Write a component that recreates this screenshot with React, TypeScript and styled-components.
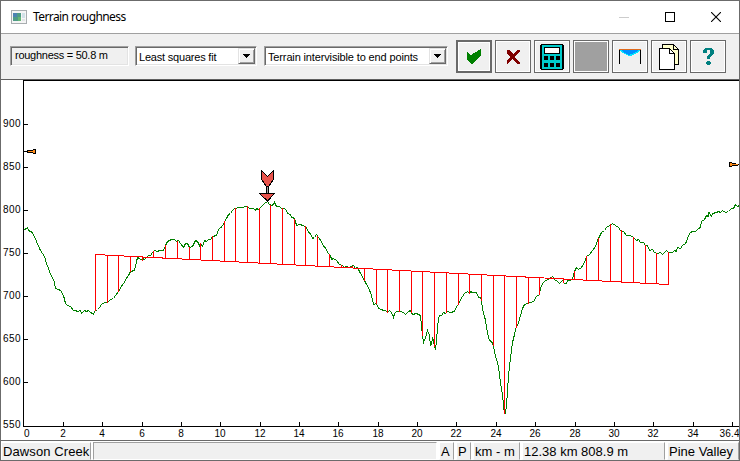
import React from 'react';
import styled, { createGlobalStyle } from 'styled-components';

const GlobalStyle = createGlobalStyle`
  * { box-sizing: border-box; }
  body { margin: 0; background: #fff; overflow: hidden; }
`;

const Window = styled.div`
  width: 740px;
  height: 461px;
  display: flex;
  flex-direction: column;
  border: 1px solid #6b6b6b;
  background: #f0f0f0;
  font-family: 'Liberation Sans', Arial, sans-serif;
  color: #000;
`;

const TitleBar = styled.header`
  height: 32px;
  flex: none;
  display: flex;
  align-items: center;
  padding-left: 10px;
  background: #fff;
`;

const Title = styled.h1`
  flex: 1;
  margin: 0 0 0 6px;
  font: 400 12px/16px 'Noto Sans', 'Open Sans', sans-serif;
  letter-spacing: -0.58px;
`;

const Caption = styled.span`
  width: 46px;
  height: 31px;
  display: flex;
  align-items: center;
  justify-content: center;
`;

const Toolbar = styled.div`
  height: 47px;
  flex: none;
  display: flex;
  align-items: flex-start;
  border-top: 1px solid #a0a0a0;
  border-bottom: 1px solid #606060;
  padding: 7px 0 0 9px;
`;

const sunken = `
  border: 1px solid;
  border-color: #a0a0a0 #fff #fff #a0a0a0;
  box-shadow: inset 1px 1px 0 #696969, inset -1px -1px 0 #e3e3e3;
`;

const Readout = styled.div<{ $spacing: number }>`
  width: 119px;
  height: 20px;
  margin-top: 5px;
  padding-left: 4px;
  font-size: 11px;
  line-height: 17px;
  letter-spacing: ${p => p.$spacing}px;
  white-space: nowrap;
  ${sunken}
`;

const Combo = styled.div<{ $width: number; $gap: number; $spacing: number }>`
  width: ${p => p.$width}px;
  height: 20px;
  margin: 5px 0 0 ${p => p.$gap}px;
  padding: 1px 1px 1px 3px;
  display: flex;
  justify-content: space-between;
  background: #fff;
  font-size: 11px;
  line-height: 18px;
  letter-spacing: ${p => p.$spacing}px;
  white-space: nowrap;
  ${sunken}
`;

const DropButton = styled.span`
  width: 17px;
  height: 16px;
  display: flex;
  align-items: center;
  justify-content: center;
  background: #f0f0f0;
  border: 1px solid;
  border-color: #e3e3e3 #696969 #696969 #e3e3e3;
  box-shadow: inset 1px 1px 0 #fff, inset -1px -1px 0 #a0a0a0;
`;

const Tools = styled.div`
  display: flex;
  gap: 3px;
  margin-left: 8px;
`;

const ToolButton = styled.button<{ $default?: boolean; $fill?: string }>`
  width: 36px;
  height: 33px;
  margin: -1px 0 0;
  padding: 0;
  display: flex;
  align-items: center;
  justify-content: center;
  border: ${p => (p.$default ? 2 : 1)}px solid #696969;
  box-shadow: inset 0 0 0 1px #fff;
  background: ${p => p.$fill || '#f0f0f0'};
`;

const PlotArea = styled.main`
  height: 360px;
  flex: none;
  background: #fff;
`;

const StatusBar = styled.footer`
  height: 20px;
  flex: none;
  display: flex;
  gap: 2px;
  border-top: 1px solid #696969;
  background: #fff;
`;

const Cell = styled.div<{ $width: number; $inset: number; $spacing?: number; $sunken?: boolean }>`
  width: ${p => p.$width}px;
  height: 18px;
  margin-top: 1px;
  flex: none;
  padding-left: ${p => p.$inset}px;
  overflow: hidden;
  background: #f0f0f0;
  border: 1px solid;
  border-color: ${p => (p.$sunken ? '#a0a0a0 #fff #fff #a0a0a0' : '#fff #a0a0a0 #f0f0f0 #fff')};
  font-size: 13px;
  line-height: 18px;
  letter-spacing: ${p => p.$spacing || 0}px;
  white-space: nowrap;
`;

const Icon = styled.svg`
  display: block;
  flex: none;
  shape-rendering: crispEdges;
`;

type Point = [number, number];

const terrain: Point[] = [
  [23, 230], [24, 229], [27, 227.5], [28, 230], [31, 231.5], [33, 234], [36, 241], [40, 250], [42, 253], [44, 256],
  [46, 263], [48, 268], [50, 274], [52, 277], [54, 282], [55, 288], [58, 289], [60, 290], [63, 295], [65, 303],
  [67, 305], [70, 306], [73, 310], [75, 310], [77, 311], [80, 310], [81, 313], [83, 311], [84, 310], [86, 311],
  [88, 310], [90, 312], [92, 313], [93, 314], [94, 311], [97, 309], [99, 307], [101, 304], [104, 302], [107, 302],
  [110, 299], [113, 298], [115, 295], [118, 291], [120, 288], [121, 285], [123, 284], [125, 279], [128, 275],
  [130, 271], [134, 270], [136, 261], [137, 257], [139, 258], [142, 260], [143, 258], [144, 259], [146, 257],
  [148, 255], [150, 255], [152, 252], [154, 250], [157, 251], [159, 250], [163, 250], [165, 245], [167, 241],
  [169, 240], [171, 239], [174, 239], [176, 241], [178, 240], [180, 243], [183, 247], [185, 243], [187, 243],
  [189, 247], [192, 246], [194, 242], [195, 240], [197, 241], [199, 245], [200, 243], [202, 246], [204, 240],
  [206, 241], [208, 239], [210, 239], [212, 236], [216, 235], [218, 229], [220, 227], [222, 226], [224, 221],
  [226, 218], [228, 214], [230, 213], [232, 210], [234, 208], [240, 207], [247, 206], [249, 208], [253, 208],
  [255, 210], [256, 208], [258, 209], [260, 207], [262, 205], [264, 203], [267, 201], [269, 204], [271, 205],
  [273, 204], [274, 202], [276, 206], [279, 206], [281, 208], [284, 208], [286, 210], [287, 213], [290, 214],
  [291, 217], [293, 217], [295, 221], [296, 225], [299, 224], [303, 225], [306, 227], [308, 232], [310, 233],
  [312, 238], [314, 237], [316, 234], [318, 237], [321, 241], [323, 246], [325, 247], [327, 252], [330, 255],
  [331, 259], [333, 258], [336, 260], [339, 264], [342, 265], [344, 267], [346, 266], [348, 267], [351, 266],
  [353, 265], [355, 268], [357, 267], [360, 273], [363, 278], [366, 284], [368, 287], [371, 295], [373, 304],
  [376, 303], [378, 308], [381, 309], [383, 310], [385, 310], [387, 312], [389, 310], [391, 312], [393, 317],
  [394, 313], [396, 311], [400, 311], [403, 312], [405, 314], [408, 311], [410, 310], [412, 314], [416, 313],
  [420, 315], [421, 325], [422, 335], [423, 342], [425, 337], [427, 330], [429, 335], [430, 345], [431, 344],
  [432, 337], [433, 341], [434, 346], [435, 349], [436, 340], [437, 327], [438, 318], [439, 315], [441, 315],
  [443, 312], [445, 313], [447, 311], [450, 312], [454, 311], [456, 306], [458, 304], [460, 299], [462, 296],
  [464, 293], [467, 291], [469, 293], [470, 291], [472, 292], [476, 292], [478, 297], [480, 297], [481, 300],
  [482, 309], [484, 316], [485, 320], [487, 333], [489, 340], [491, 341], [493, 345], [494, 352], [496, 359],
  [498, 366], [500, 383], [502, 394], [503, 405], [504, 413], [505, 413], [506, 405], [507, 391], [508, 375],
  [510, 357], [512, 342], [514, 334], [515, 329], [518, 322], [520, 315], [522, 308], [524, 304], [527, 303],
  [530, 302], [533, 301], [536, 296], [539, 294], [540, 288], [542, 283], [544, 281], [547, 279], [549, 278],
  [552, 276], [554, 279], [557, 281], [559, 283], [562, 280], [564, 283], [566, 283], [567, 280], [570, 280],
  [572, 278], [574, 271], [576, 267], [578, 269], [581, 267], [584, 262], [586, 256], [589, 254], [592, 250],
  [595, 246], [597, 240], [599, 236], [601, 232], [604, 230], [606, 227], [609, 225], [612, 223], [615, 225],
  [618, 227], [620, 230], [623, 231], [626, 235], [630, 235], [633, 237], [636, 240], [638, 239], [640, 242],
  [643, 242], [645, 245], [647, 245], [649, 250], [652, 249], [654, 252], [657, 253], [660, 252], [662, 254],
  [664, 252], [666, 250], [668, 252], [672, 252], [674, 250], [676, 251], [677, 247], [680, 248], [682, 245],
  [685, 243], [686, 241], [688, 235], [690, 232], [692, 231], [695, 231], [698, 228], [700, 227], [701, 221],
  [704, 219], [706, 215], [708, 216], [708.5, 212], [711, 216], [712, 213], [716, 212], [718, 211], [720, 212],
  [722, 210], [725, 212], [728, 211], [731, 208], [733, 208], [735, 204], [737, 206], [739, 205],
];

const groundAt = (x: number) => {
  const i = Math.max(1, terrain.findIndex(p => p[0] >= x));
  const [x0, y0] = terrain[i - 1];
  const [x1, y1] = terrain[i];
  return y0 + ((y1 - y0) * (x - x0)) / (x1 - x0);
};
const fitAt = (x: number) => 254 + ((x - 95) * 30) / 573;
const samples = Array.from({ length: 50 }, (_, i) => Math.round(95 + i * 11.694));
const fitPath = samples.map(x => `${x + 0.5},${fitAt(x) + 0.5}`).join(' ');

const elevations = Array.from({ length: 8 }, (_, i) => 900 - i * 50);
const distances = Array.from({ length: 18 }, (_, i) => i * 2);
const elevationY = (m: number) => Math.round(124 + (900 - m) * 0.8605);
const distanceX = (km: number) => Math.round(23.47 + km * 19.68);

function Chart() {
  return (
    <svg width="738" height="360" viewBox="1 80 738 360" style={{ display: 'block' }}>
      <g shapeRendering="crispEdges" fill="none">
        <path d="M739 80.5H23.5V426.5H739" stroke="#000" />
        {elevations.slice(0, -1).map(m => <path key={m} d={`M24 ${elevationY(m) + 0.5}h4`} stroke="#000" />)}
        {distances.slice(1).concat(36).map((km, i) => <path key={i} d={`M${distanceX(km) + 0.5} 422v4`} stroke="#000" />)}
        <polyline points={terrain.map(([x, y]) => `${x + 0.5},${y + 0.5}`).join(' ')} stroke="#008000" />
        <polyline points={fitPath} stroke="#f00" />
        {samples.map(x => {
          const a = fitAt(x);
          const b = groundAt(x);
          return <path key={x} d={`M${x + 0.5} ${Math.round(Math.min(a, b))}V${Math.round(Math.max(a, b)) + 1}`} stroke="#f00" />;
        })}
      </g>
      <g shapeRendering="crispEdges">
        <path d="M24 151h3v-1h6v-1h3v5h-3v-1h-6v-1h-3z" fill="#000" />
        <path d="M28 151h5v-1h2v3h-2v-1h-5z" fill="#ff8c1a" />
        <path d="M739 164h-3v-1h-4v-1h-3v5h3v-1h6v-1h1z" fill="#000" />
        <path d="M738 164h-6v-1h-2v3h2v-1h6z" fill="#ff8c1a" />
      </g>
      <g stroke="#000" shapeRendering="crispEdges">
        <path d="M261.5 170.5L267.5 176.5L273.5 170.5V179.5L268.5 186.5H266.5L261.5 179.5Z" fill="#e9544d" />
        <path d="M266.5 186.5H268.5V193.5H266.5Z" fill="#a0a0a0" />
        <path d="M259.5 193.5H274.5L267.5 201Z" fill="#e9544d" />
      </g>
      <g fontFamily="'Liberation Sans', Arial, sans-serif" fontSize="10" fill="#000">
        {elevations.map(m => (
          <text key={m} x="3" y={m === 550 ? 428 : elevationY(m) + 3} textLength="17.5">{m}</text>
        ))}
        {distances.map(km => (
          <text key={km} x={km === 0 ? 26.8 : distanceX(km)} y="437" textAnchor="middle">{km}</text>
        ))}
        <text x="719.5" y="437" textLength="20">36.4</text>
      </g>
    </svg>
  );
}

const Arrow = () => (
  <Icon width="7" height="4"><path d="M0 0h7v1h-1v1h-1v1h-1v1h-1v-1h-1v-1h-1v-1h-1z" fill="#000" /></Icon>
);

function AppIcon() {
  return (
    <Icon width="16" height="14" viewBox="0 0 16 14">
      <path d="M.5.5h15v13H.5z" fill="#f5f5f5" stroke="#a8adb0" />
      <path d="M2 3h8v8H2z" fill="#4f9b86" />
      <path d="M2 3h4v4H2z" fill="#4d83b2" />
      <path d="M7 7h3v4H7z" fill="#65b674" />
      <path d="M11 3h3v5h-3z" fill="#d2e1e8" />
      <path d="M11 9h3v2h-3z" fill="#e2e5e7" />
    </Icon>
  );
}

function CheckIcon() {
  return (
    <Icon width="14" height="15" viewBox="0 0 14 15">
      <path d="M0 3h1v1h1v1h1v1h2v-1h1v-1h2v-1h2v-1h1v-1h2v-1h1v7h-1v1h-1v1h-1v1h-1v1h-1v1h-1v1h-1v1h-1v1h-2v-1h-1v-1h-1v-1h-1v-1h-1z" fill="#008000" />
    </Icon>
  );
}

function CrossIcon() {
  return (
    <Icon width="13" height="14" viewBox="0 0 13 14">
      <path d="M0 0h3v1h1v1h1v1h1v1h1v-1h1v-1h1v-1h1v-1h3v2h-1v1h-1v1h-1v1h-1v1h-1v2h1v1h1v1h1v1h1v1h1v2h-3v-1h-1v-1h-1v-1h-1v-1h-1v-1h-1v1h-1v1h-1v1h-1v1h-1v1h-3v-2h1v-1h1v-1h1v-1h1v-1h1v-2h-1v-1h-1v-1h-1v-1h-1v-1h-1z" fill="#800000" />
    </Icon>
  );
}

function CalculatorIcon() {
  return (
    <Icon width="24" height="26" viewBox="0 0 24 26">
      <path d="M1 0h22v1h1v24h-1v1H1v-1H0V1h1z" fill="#000" />
      <path d="M2 1h20v24H2z" fill="#00cccc" />
      <path d="M4 3h16v7H4z" fill="#000" />
      <path d="M5 4h14v5H5z" fill="#fff" />
      {[12, 19].map(y => [4, 10, 16].map(x => <path key={`${x}-${y}`} d={`M${x} ${y}h4v4h-4z`} fill="#000" />))}
    </Icon>
  );
}

function ValleyIcon() {
  return (
    <Icon width="22" height="15" viewBox="0 0 22 15">
      <path d="M1 1h20v1h-1v1h-1v1h-2v1h-2v1h-2v1H9V6H7V5H5V4H3V3H2V2H1z" fill="#00e5ff" />
      <path d="M3 1h16v1h-1v1h-2v1h-2v1h-3v1H9V5H7V4H5V3H4V2H3z" fill="#0090ff" />
      <path d="M.5 15V.5M21.5 15V.5" stroke="#000" />
      <path d="M0 .5h22" stroke="#e06a1c" />
    </Icon>
  );
}

function CopyIcon() {
  return (
    <Icon width="20" height="26" viewBox="0 0 20 26">
      <path d="M3.5 .5h11l5 5v15h-16z" fill="#ffffcc" stroke="#000" />
      <path d="M14.5.5v5h5" fill="none" stroke="#000" />
      <path d="M.5 4.5h10l5 5v16H.5z" fill="#fff" stroke="#000" />
      <path d="M10.5 4.5v5h5" fill="none" stroke="#000" />
    </Icon>
  );
}

function HelpIcon() {
  return (
    <Icon width="11" height="17" viewBox="0 0 11 17">
      <path d="M2 0h7v1h1v1h1v4h-1v1h-1v1h-1v1h-1v2H4V8h1V7h1V6h1V2H4v3H0V2h1V1h1zM4 13h3v1h1v2H7v1H4v-1H3v-2h1z" fill="#008080" />
    </Icon>
  );
}

export default function App() {
  return (
    <Window>
      <GlobalStyle />
      <TitleBar>
        <AppIcon />
        <Title>Terrain roughness</Title>
        <Caption><Icon width="10" height="1"><path d="M0 .5h10" stroke="#ccc" /></Icon></Caption>
        <Caption><Icon width="10" height="10"><path d="M.5.5h9v9h-9z" fill="none" stroke="#000" /></Icon></Caption>
        <Caption>
          <svg width="10" height="10"><path d="M0 0l10 10M10 0L0 10" stroke="#000" strokeWidth="1.1" /></svg>
        </Caption>
      </TitleBar>
      <Toolbar>
        <Readout $spacing={-0.27}>roughness = 50.8 m</Readout>
        <Combo $width={122} $gap={6} $spacing={-0.2}>
          Least squares fit<DropButton><Arrow /></DropButton>
        </Combo>
        <Combo $width={184} $gap={7} $spacing={-0.14}>
          Terrain intervisible to end points<DropButton><Arrow /></DropButton>
        </Combo>
        <Tools>
          <ToolButton $default aria-label="Accept"><CheckIcon /></ToolButton>
          <ToolButton aria-label="Cancel"><CrossIcon /></ToolButton>
          <ToolButton aria-label="Calculate"><CalculatorIcon /></ToolButton>
          <ToolButton aria-label="Colour" $fill="#a0a0a0" />
          <ToolButton aria-label="Terrain"><ValleyIcon /></ToolButton>
          <ToolButton aria-label="Copy"><CopyIcon /></ToolButton>
          <ToolButton aria-label="Help"><HelpIcon /></ToolButton>
        </Tools>
      </Toolbar>
      <PlotArea><Chart /></PlotArea>
      <StatusBar>
        <Cell $width={90} $inset={1} $spacing={0.1}>Dawson Creek</Cell>
        <Cell $width={344} $inset={0} $sunken />
        <Cell $width={15} $inset={1}>A</Cell>
        <Cell $width={15} $inset={1}>P</Cell>
        <Cell $width={47} $inset={1}>km - m</Cell>
        <Cell $width={143} $inset={1}>12.38 km 808.9 m</Cell>
        <Cell $width={72} $inset={1}>Pine Valley</Cell>
      </StatusBar>
    </Window>
  );
}
